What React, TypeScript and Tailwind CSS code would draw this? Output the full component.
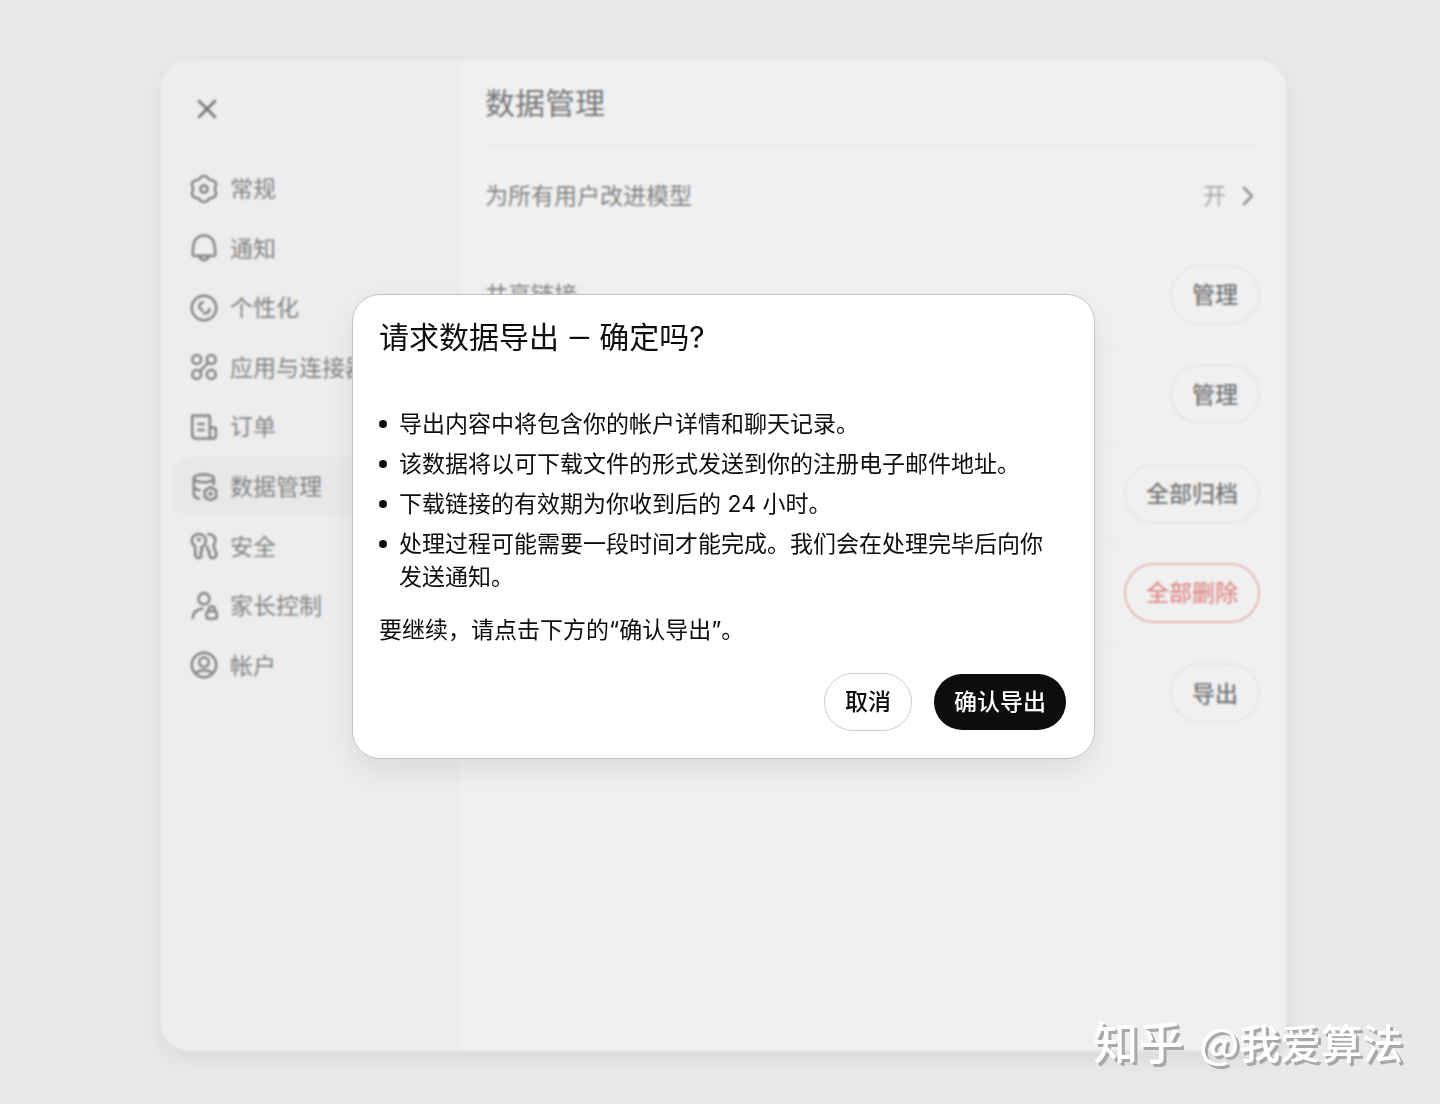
import type { ReactNode } from "react";
import clsx from "clsx";

type NavItem = { label: string; icon: ReactNode; active?: boolean };
type SettingRow = { id: string; label?: string; action?: string; danger?: boolean };

const Icon = ({ children }: { children: ReactNode }) => (
    <svg
        viewBox="0 0 28 28"
        className="size-7 shrink-0"
        fill="none"
        stroke="currentColor"
        strokeWidth="2.5"
        strokeLinecap="round"
        strokeLinejoin="round"
        aria-hidden="true"
    >
        {children}
    </svg>
);

// six-lobed cog outline, one lobe pointing up
const cogPoints = (cx: number, cy: number, radius: number, depth: number) =>
    Array.from({ length: 72 }, (_, i) => {
        const angle = (i * Math.PI) / 36;
        const r = radius + depth * Math.cos(6 * angle);
        return `${(cx + r * Math.sin(angle)).toFixed(2)},${(cy - r * Math.cos(angle)).toFixed(2)}`;
    }).join(" ");

const navItems: NavItem[] = [
    {
        label: "常规",
        icon: (
            <Icon>
                <polygon points={cogPoints(14, 14, 12.1, 1.1)} />
                <circle cx="14" cy="14" r="3.600" />
            </Icon>
        ),
    },
    {
        label: "通知",
        icon: (
            <Icon>
                <path d="M14 1.500C7.800 1.500 3.800 6 3.300 12.500L2.600 19.500Q2.400 21.800 4.400 21.800H23.600Q25.600 21.800 25.400 19.500L24.700 12.500C24.200 6 20.200 1.500 14 1.500Z" />
                <path d="M9.500 22.500C10.500 27.200 17.500 27.200 18.500 22.500" />
            </Icon>
        ),
    },
    {
        label: "个性化",
        icon: (
            <Icon>
                <circle cx="14" cy="14" r="12.200" />
                <path d="M12.800 8.300C9.200 9.500 8.200 13 10.600 15.200L12.400 16M13.600 18.800C16.500 20.200 19.400 18.200 19.400 15" />
            </Icon>
        ),
    },
    {
        label: "应用与连接器",
        icon: (
            <Icon>
                <circle cx="6.700" cy="6.500" r="4.400" />
                <circle cx="21.300" cy="6.500" r="4.400" />
                <circle cx="6.700" cy="21.500" r="4.400" />
                <circle cx="21.300" cy="21.500" r="4.400" />
                <path d="M18.200 9.700L9.800 18.300" />
            </Icon>
        ),
    },
    {
        label: "订单",
        icon: (
            <Icon>
                <path d="M22.800 25.600H6Q2.200 25.600 2.200 22V4Q2.200 2 4.200 2.400L7.500 3L11 2.200L14.500 3L17.800 2.400Q19.800 2 19.800 4V22.500Q19.800 25.600 22.600 25.600Q25.800 25.600 25.800 22.500V16.500Q25.800 14.600 24 14.600H20" />
                <path d="M8.200 11H13.800M8.200 17H13.800" />
            </Icon>
        ),
    },
    {
        label: "数据管理",
        active: true,
        icon: (
            <Icon>
                <ellipse cx="13.800" cy="5.400" rx="10" ry="3.900" />
                <path d="M3.800 6V21.500Q4.300 24.800 9 25.600M23.800 6V11.500M3.800 14Q5 16.600 9.500 17.200" />
                <polygon points={cogPoints(20.5, 20.8, 6, 0.6)} />
                <circle cx="20.500" cy="20.800" r="1" />
            </Icon>
        ),
    },
    {
        label: "安全",
        icon: (
            <Icon>
                <path d="M8.800 1.900C4.800 1.900 1.800 4.800 1.800 8.400C1.800 10.900 3.100 13 5.200 14.200V23.500Q8.300 28.600 11.800 23.800L10.300 20.800L12.300 18.400L11 15.500C14 14.300 15.800 11.600 15.800 8.400C15.800 4.800 12.800 1.900 8.800 1.900Z" />
                <circle cx="8.800" cy="7.600" r=".8" />
                <path d="M18.200 2.300C22.200 2 25.400 5 25.400 8.600C25.400 10.400 24.700 12 23.300 13.200L26.600 22.500Q25.300 27 21.200 26L18.800 22.500L19.800 19.500L17.300 17.800L17.500 14.500" />
            </Icon>
        ),
    },
    {
        label: "家长控制",
        icon: (
            <Icon>
                <circle cx="14" cy="6.800" r="5.600" />
                <path d="M2.800 26C3.200 20.600 7 17.400 12.400 16.800" />
                <rect x="16.600" y="19.300" width="10.200" height="7.500" rx="2" />
                <path d="M18.700 19V17.400C18.700 13.400 24.700 13.400 24.700 17.400V19" />
            </Icon>
        ),
    },
    {
        label: "帐户",
        icon: (
            <Icon>
                <circle cx="14" cy="14" r="12.200" />
                <circle cx="14" cy="11.300" r="4.700" />
                <path d="M6 22.500C9 18.300 19 18.300 22 22.500" />
            </Icon>
        ),
    },
];

const rows: SettingRow[] = [
    { id: "improve", label: "为所有用户改进模型" },
    { id: "shared", label: "共享链接", action: "管理" },
    { id: "archived", action: "管理" },
    { id: "archive-all", action: "全部归档" },
    { id: "delete-all", action: "全部删除", danger: true },
    { id: "export", action: "导出" },
];

const notes = [
    "导出内容中将包含你的帐户详情和聊天记录。",
    "该数据将以可下载文件的形式发送到你的注册电子邮件地址。",
    "下载链接的有效期为你收到后的 24 小时。",
    "处理过程可能需要一段时间才能完成。我们会在处理完毕后向你发送通知。",
];

const Sidebar = () => (
    <aside className="w-[299px] shrink-0 bg-[#ededed] px-[11px] pt-[29px]">
        <button aria-label="关闭" className="ml-[15px] flex size-10 items-center justify-center text-[#747474]">
            <svg viewBox="0 0 20 20" className="size-5" fill="none" stroke="currentColor" strokeWidth="2.500" strokeLinecap="round" aria-hidden="true">
                <path d="M2 2L18 18M18 2L2 18" />
            </svg>
        </button>
        <nav className="mt-[30px] grid h-[536px] auto-rows-fr">
            {navItems.map((item) => (
                <a
                    key={item.label}
                    href="#"
                    className={clsx(
                        "flex items-center gap-3 rounded-[18px] pl-[18px] whitespace-nowrap text-[#848484]",
                        item.active && "bg-[#e8e8e8]"
                    )}
                >
                    {item.icon}
                    <span className="pt-0.5">{item.label}</span>
                </a>
            ))}
        </nav>
    </aside>
);

const DataControls = () => (
    <main className="flex-1 bg-[#f0f0f0] pr-[26px] pl-[25px]">
        <h1 className="flex h-[87px] items-center border-b-2 border-[#eaeaea] pt-0.5 text-[30px] text-[#767676]">数据管理</h1>
        <div className="grid h-[596px] auto-rows-fr divide-y-2 divide-[#ececec]">
            {rows.map((row) => (
                <div key={row.id} className="flex items-center">
                    {row.label && <span className="pt-0.5 text-[#848484]">{row.label}</span>}
                    {row.action ? (
                        <button
                            className={clsx(
                                "ml-auto h-[60px] rounded-full border-2 px-5 pt-0.5 font-medium",
                                row.danger ? "border-[#e8b8b8] text-[#e09090]" : "border-[#e6e6e6] text-[#767676]"
                            )}
                        >
                            {row.action}
                        </button>
                    ) : (
                        <button className="ml-auto flex items-center gap-4 pr-1.5 text-[#acacac]">
                            <span className="pt-0.5">开</span>
                            <svg viewBox="0 0 12 20" className="h-5 w-3" fill="none" stroke="#949494" strokeWidth="2.500" strokeLinecap="round" strokeLinejoin="round" aria-hidden="true">
                                <path d="M2 2L10 10L2 18" />
                            </svg>
                        </button>
                    )}
                </div>
            ))}
        </div>
    </main>
);

const ExportDialog = () => (
    <div className="absolute inset-0 flex items-center justify-center pb-[52px] pl-[7px] backdrop-blur-[1px]">
        <div
            role="dialog"
            aria-modal="true"
            aria-labelledby="export-title"
            className="w-[743px] rounded-[28px] border border-[#c2c2c2] bg-white pt-5 pr-7 pb-[27px] pl-[26px] text-[#0d0d0d] shadow-[0_12px_28px_rgba(0,0,0,0.08)]"
        >
            <h2 id="export-title" className="text-[30px] leading-[44px]">
                请求数据导出 <span className="font-['Roboto']">—</span> 确定吗?
            </h2>
            <ul className="mt-12 flex flex-col gap-[7px] pr-4">
                {notes.map((note) => (
                    <li key={note} className="flex gap-3">
                        <span className="mt-3 size-2 shrink-0 rounded-full bg-[#0d0d0d]" />
                        {note}
                    </li>
                ))}
            </ul>
            <p className="mt-5">要继续，请点击下方的“确认导出”。</p>
            <div className="mt-[26px] flex items-center justify-end gap-[22px]">
                <button className="h-[58px] rounded-full border border-[#cfcfcf] px-5 pt-0.5 font-medium">取消</button>
                <button className="h-14 rounded-full bg-[#0d0d0d] px-5 pt-0.5 font-medium text-white">确认导出</button>
            </div>
        </div>
    </div>
);

export default function App() {
    return (
        <div
            lang="zh-CN"
            className="relative flex min-h-screen overflow-hidden bg-[#e9e9e9] pt-[60px] pr-[154px] pb-[53px] pl-[161px] font-['Inter','Noto_Sans_CJK_SC',sans-serif] text-[23px] leading-[33px]"
        >
            {/* list on the page behind */}
            <div className="absolute top-[468px] right-0 h-[100px] w-[150px] border-y-2 border-[#e6e6e6]" />
            <div className="relative flex flex-1 overflow-hidden rounded-[28px] shadow-[0_8px_24px_rgba(0,0,0,0.07)]">
                <Sidebar />
                <DataControls />
            </div>
            <ExportDialog />
            {/* watermark */}
            <div className="absolute right-[37px] bottom-[33px] flex items-center gap-4 font-['Noto_Sans_CJK_SC',sans-serif] text-[41px] leading-[60px] font-medium text-white [text-shadow:3px_3px_0_#a8a8a8]">
                <span className="text-[45px]">知乎</span>
                <span>@我爱算法</span>
            </div>
        </div>
    );
}
